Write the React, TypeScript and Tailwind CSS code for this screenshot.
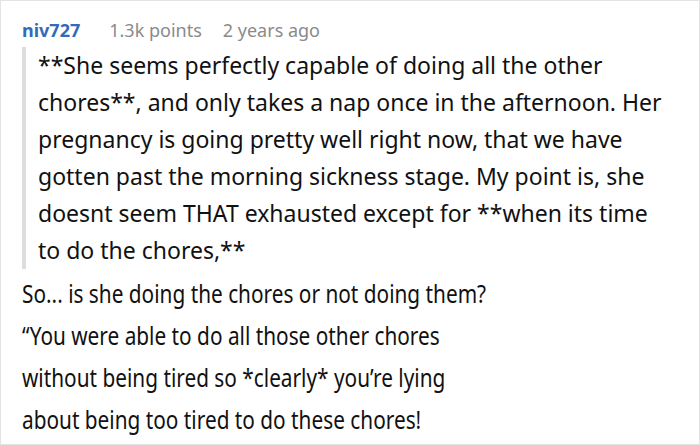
const quoteLines = [
  "**She seems perfectly capable of doing all the other",
  "chores**, and only takes a nap once in the afternoon. Her",
  "pregnancy is going pretty well right now, that we have",
  "gotten past the morning sickness stage. My point is, she",
  "doesnt seem THAT exhausted except for **when its time",
  "to do the chores,**",
];

const bodyLines = [
  "So... is she doing the chores or not doing them?",
  "\u201cYou were able to do all those other chores",
  "without being tired so *clearly* you\u2019re lying",
  "about being too tired to do these chores!",
];

export default function App() {
  return (
    <div className="w-[700px] h-[445px] overflow-hidden border border-[#e3e3e3] bg-white font-['Noto_Sans',sans-serif]">
      <div className="pl-[21px] pt-[17px]">
        <div className="flex items-baseline text-[18px] leading-[24px]">
          <span className="font-bold text-[#336bb8]">niv727</span>
          <span className="ml-[29px] text-[#8a8a8a]">1.3k points</span>
          <span className="ml-[21px] text-[#8a8a8a]">2 years ago</span>
        </div>
        <div className="mt-[5px] border-l-4 border-[#dddddd] pl-[12px] text-[23px] leading-[37px] text-[#111] whitespace-nowrap">
          {quoteLines.map((l, i) => (
            <div key={i}>{l}</div>
          ))}
        </div>
        <div className="mt-[3px] origin-left scale-x-[0.8] text-[26px] leading-[42px] text-[#111] whitespace-nowrap">
          {bodyLines.map((l, i) => (
            <div key={i}>{l}</div>
          ))}
        </div>
      </div>
    </div>
  );
}
